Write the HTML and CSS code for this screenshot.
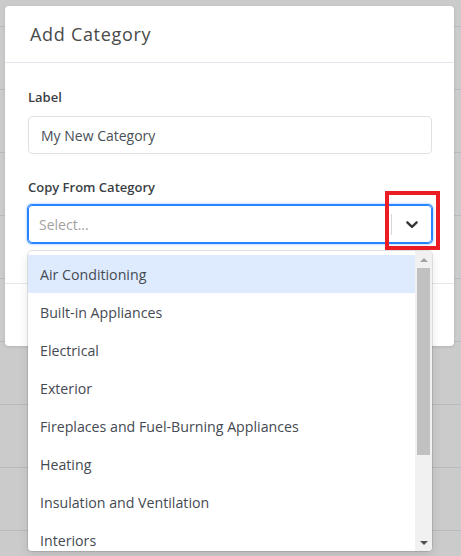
FILE: index.html
```html
<!DOCTYPE html>
<html lang="en">
<head>
  <meta charset="UTF-8">
  <meta name="viewport" content="width=device-width, initial-scale=1.0">
  <title>Add Category</title>
  <link rel="stylesheet" href="styles.css">
</head>
<body>
  <div class="modal">
    <div class="modal-header">
      <h2>Add Category</h2>
    </div>
    <div class="modal-body">
      <div class="group">
        <label>Label</label>
        <input type="text" value="My New Category">
      </div>
      <div class="group last">
        <label>Copy From Category</label>
        <div class="select">
          <div class="select-control">
            <span class="placeholder">Select...</span>
            <span class="separator"></span>
            <svg class="chevron" width="20" height="20" viewBox="0 0 20 20">
              <path d="M4.516 7.548c0.436-0.446 1.043-0.481 1.576 0l3.908 3.747 3.908-3.747c0.533-0.481 1.141-0.446 1.574 0 0.436 0.445 0.408 1.197 0 1.615-0.406 0.418-4.695 4.502-4.695 4.502-0.217 0.223-0.502 0.335-0.787 0.335s-0.57-0.112-0.789-0.335c0 0-4.287-4.084-4.695-4.502s-0.436-1.170 0-1.615z"/>
            </svg>
          </div>
          <div class="menu">
            <div class="menu-list">
              <div class="option active">Air Conditioning</div>
              <div class="option">Built-in Appliances</div>
              <div class="option">Electrical</div>
              <div class="option">Exterior</div>
              <div class="option">Fireplaces and Fuel-Burning Appliances</div>
              <div class="option">Heating</div>
              <div class="option">Insulation and Ventilation</div>
              <div class="option">Interiors</div>
            </div>
            <div class="scrollbar">
              <span class="arrow up"></span>
              <span class="thumb"></span>
              <span class="arrow down"></span>
            </div>
          </div>
        </div>
      </div>
    </div>
    <div class="modal-footer"></div>
  </div>

  <div class="highlight"></div>
</body>
</html>
```

FILE: styles.css
```css
body {
  margin: 0;
  padding: 6px 7px 0 5px;
  height: 556px;
  box-sizing: border-box;
  font-family: "Open Sans", sans-serif;
  background-color: #cbcbcb;
  background-image: linear-gradient(#b9b9c1 0 1px, transparent 1px);
  background-size: 100% 63px;
  background-position: 0 26px;
  overflow: hidden;
}
.modal {
  background: #ffffff;
  border-radius: 4px;
  box-shadow: 0 1px 3px rgba(0, 0, 0, 0.12);
}
.modal-header {
  height: 56px;
  padding: 0 25px;
  display: flex;
  align-items: center;
  border-bottom: 1px solid #e4e7ee;
}
.modal-header h2 {
  margin: 0;
  font-size: 18px;
  font-weight: 400;
  letter-spacing: 0.7px;
  color: #4a4a4a;
}
.modal-body {
  padding: 24px 22px 40px 23px;
}
.group {
  margin-bottom: 23px;
}
.group.last {
  margin-bottom: 0;
}
label {
  display: block;
  height: 20px;
  line-height: 20px;
  margin-bottom: 9px;
  font-size: 13px;
  font-weight: 600;
  color: #3b3f45;
}
.group.last label {
  margin-bottom: 8px;
}
input {
  display: block;
  box-sizing: border-box;
  width: 100%;
  height: 38px;
  padding: 0 12px;
  border: 1px solid #dee2e6;
  border-radius: 4px;
  font-family: inherit;
  font-size: 14px;
  color: #495057;
  outline: none;
}
.select {
  position: relative;
}
.select-control {
  box-sizing: border-box;
  height: 38px;
  display: flex;
  align-items: center;
  border: 1px solid #2684ff;
  border-radius: 4px;
  box-shadow: 0 0 0 1px #2684ff, 0 0 2px 2px rgba(38, 132, 255, 0.25);
  padding-left: 10px;
}
.placeholder {
  flex: 1;
  font-size: 14px;
  color: #a2a2a2;
}
.separator {
  width: 1px;
  height: 21px;
  background: #d6d6d6;
}
.chevron {
  margin: 0 9px 0 10px;
  fill: #333333;
}
.modal-footer {
  height: 62px;
  border-top: 1px solid #e4e7ee;
}
.menu {
  position: absolute;
  top: 46px;
  left: 0;
  right: 0;
  height: 300px;
  display: flex;
  background: #ffffff;
  border-radius: 4px;
  box-shadow: 0 0 0 1px rgba(0, 0, 0, 0.1), 0 4px 11px rgba(0, 0, 0, 0.1);
  overflow: hidden;
}
.menu-list {
  flex: 1;
  padding-top: 4px;
  overflow: hidden;
}
.option {
  box-sizing: border-box;
  height: 38px;
  line-height: 37px;
  padding: 1px 12px 0;
  font-size: 14.2px;
  color: #444a52;
  white-space: nowrap;
}
.option.active {
  background: #deebff;
}
.scrollbar {
  width: 17px;
  display: flex;
  flex-direction: column;
  align-items: center;
  background: #f1f1f1;
}
.arrow {
  height: 17px;
  display: flex;
  align-items: center;
  justify-content: center;
}
.arrow::before {
  content: "";
  border-left: 4px solid transparent;
  border-right: 4px solid transparent;
}
.arrow.up::before {
  border-bottom: 4px solid #a3a3a3;
}
.arrow.down {
  margin-top: auto;
}
.arrow.down::before {
  border-top: 4px solid #505050;
}
.thumb {
  width: 13px;
  height: 187px;
  background: #c1c1c1;
}
.highlight {
  position: absolute;
  left: 385px;
  top: 191px;
  width: 47px;
  height: 51px;
  border: 4.5px solid #ec1c24;
}
```
